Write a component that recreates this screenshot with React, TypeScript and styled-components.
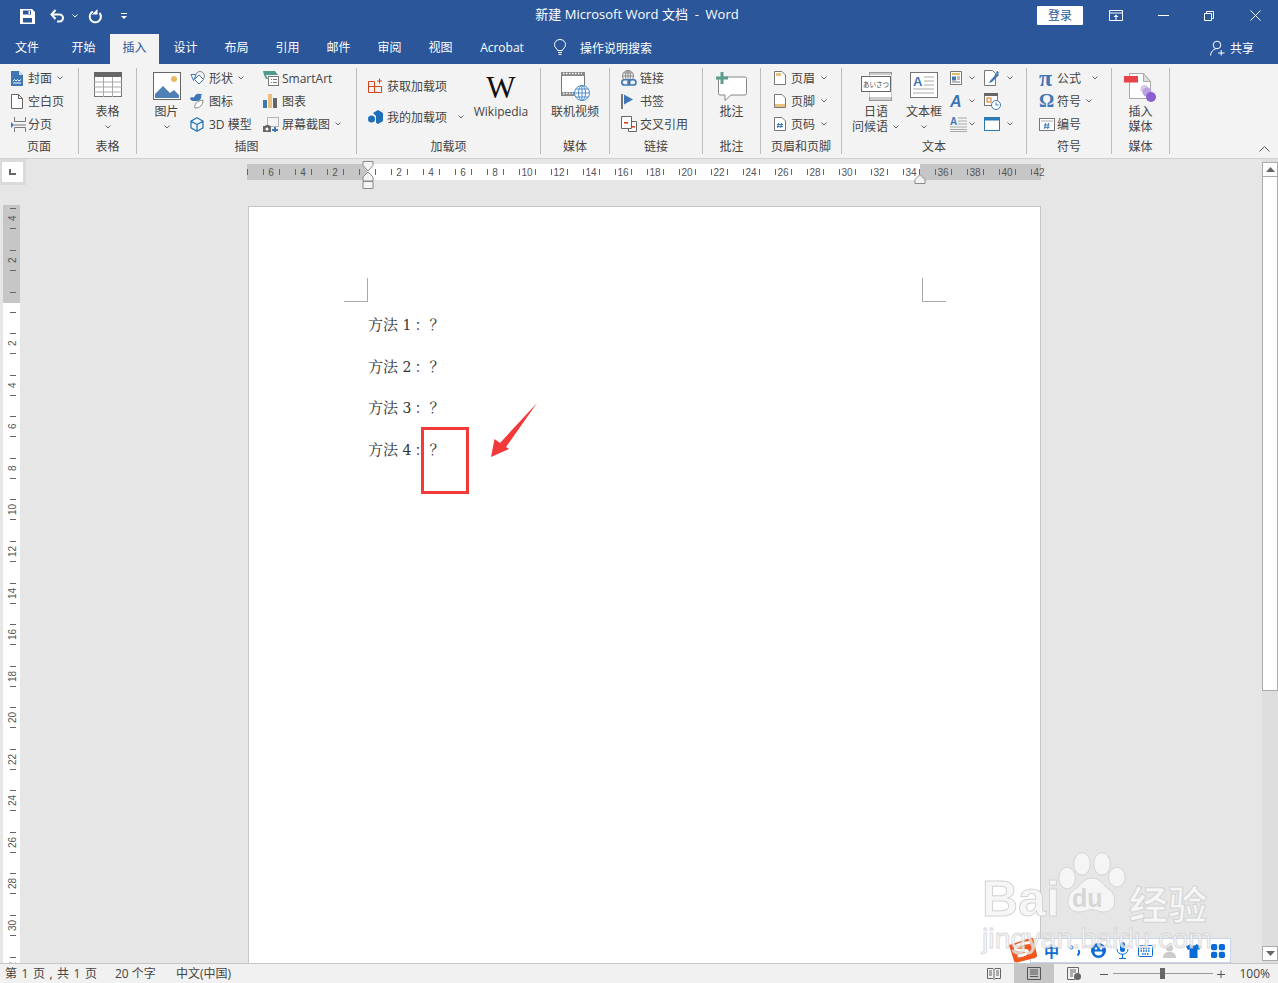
import React from "react";
import styled, { createGlobalStyle } from "styled-components";

const UI_FONT = `"Open Sans", "Noto Sans CJK SC", sans-serif`;
const BLUE = "#2b579a";

const GlobalStyle = createGlobalStyle`
  html, body { margin: 0; height: 100%; overflow: hidden; }
  #root { height: 100%; }
  * { box-sizing: border-box; }
`;

const Ico = styled.svg`
  display: block;
  flex-shrink: 0;
`;

/* chrome icons */
const Chev = ({ c = "#666" }: { c?: string }) => (
  <Ico width="8" height="6" viewBox="0 0 8 6">
    <path d="M1.5 1.5 4 4l2.5-2.5" fill="none" stroke={c} strokeWidth="1" />
  </Ico>
);
const SaveIcon = () => (
  <Ico width="15" height="15" viewBox="0 0 15 15">
    <path fillRule="evenodd" d="M0 0h12l3 3v12H0zM3 1.500v4h8v-4zM3 9v4.500h9V9z" fill="#fff" />
    <path d="M8.500 2h1.500v3H8.500z" fill="#fff" />
  </Ico>
);
const UndoIcon = () => (
  <Ico width="15" height="14" viewBox="0 0 15 14">
    <path d="M2 5.500h7.500a3.500 3.500 0 0 1 0 7H7" fill="none" stroke="#fff" strokeWidth="2" />
    <path d="M5.500 1 1.500 5.500 5.500 10" fill="none" stroke="#fff" strokeWidth="2" />
  </Ico>
);
const RedoIcon = () => (
  <Ico width="15" height="15" viewBox="0 0 15 15">
    <path d="M5 2.600a5.600 5.600 0 1 0 6.500 1.400" fill="none" stroke="#fff" strokeWidth="2" />
    <path d="M10 .5v5.500H4.500z" fill="#fff" transform="translate(-.5 -.5)" />
  </Ico>
);
const QatMore = () => (
  <Ico width="7" height="8" viewBox="0 0 7 8">
    <path d="M0 1h6v1H0zM0 4h6L3 7z" fill="#fff" />
  </Ico>
);
const DisplayOpts = () => (
  <Ico width="14" height="11" viewBox="0 0 14 11">
    <path d="M.5.500h13v10H.5zM.5 3h13" fill="none" stroke="#fff" />
    <path d="M7 4.500 9.500 7h-2v3h-1V7h-2z" fill="#fff" />
  </Ico>
);
const MinIcon = () => (
  <Ico width="11" height="2" viewBox="0 0 11 2">
    <path d="M0 .5h11" stroke="#fff" />
  </Ico>
);
const RestoreIcon = () => (
  <Ico width="10" height="10" viewBox="0 0 10 10">
    <path d="M.5 2.500h7v7h-7zM2.500 2.500v-2h7v7h-2" fill="none" stroke="#fff" />
  </Ico>
);
const CloseIcon = () => (
  <Ico width="11" height="11" viewBox="0 0 11 11">
    <path d="M.5.500l10 10M10.500.500l-10 10" stroke="#fff" />
  </Ico>
);
const BulbIcon = () => (
  <Ico width="14" height="17" viewBox="0 0 14 17">
    <path d="M4.500 11.500C4 9.500 1.500 8.500 1.500 5.500a5.500 5 0 0 1 11 0c0 3-2.500 4-3 6z M5 13.500h4M5.500 15.500h3" fill="none" stroke="#fff" />
  </Ico>
);
const UserPlus = () => (
  <Ico width="15" height="16" viewBox="0 0 15 16">
    <circle cx="7" cy="5" r="3.800" fill="none" stroke="#fff" />
    <path d="M.5 15.500c.3-3.500 2.500-6 5-6.500M8 13h6.500M11.200 10v5.500" fill="none" stroke="#fff" />
  </Ico>
);

/* page group */
const CoverIcon = () => (
  <Ico width="12" height="15" viewBox="0 0 12 15">
    <path d="M0 0h8l4 4v11H0z" fill="#3f77b5" />
    <path d="M8 0v4h4z" fill="#cfe0f0" />
    <path d="M2 10l1.500-1.500L5 10l1.500-1.500L8 10l2-1.500M2 12h8" stroke="#fff" fill="none" />
  </Ico>
);
const BlankIcon = () => (
  <Ico width="12" height="15" viewBox="0 0 12 15">
    <path d="M.5.500h7l4 4v10H.5zM7.500.500v4h4" fill="#fff" stroke="#666" />
  </Ico>
);
const BreakIcon = () => (
  <Ico width="15" height="15" viewBox="0 0 15 15">
    <path d="M0 5v6l3-3z" fill="#3f77b5" />
    <path d="M3.500 0v4.500h11V0M3 8h12M3.500 15v-4.500h11V15" fill="none" stroke="#777" />
  </Ico>
);

/* table + pictures */
const TableIcon = () => (
  <Ico width="28" height="25" viewBox="0 0 28 25">
    <rect x=".5" y=".5" width="27" height="24" fill="#fff" stroke="#777" />
    <rect width="28" height="5" fill="#666" />
    <path d="M0 10h28M0 15h28M0 20h28M9.500 5v20M18.500 5v20" stroke="#aaa" />
  </Ico>
);
const PictureIcon = () => (
  <Ico width="28" height="28" viewBox="0 0 28 28">
    <rect x=".5" y=".5" width="27" height="27" fill="#fff" stroke="#666" />
    <circle cx="21" cy="7" r="3" fill="#e9b863" />
    <path d="M2 26V22l8-8 7 7 4-3 5 5v3z" fill="#4f80b5" />
  </Ico>
);
const ShapesIcon = () => (
  <Ico width="17" height="15" viewBox="0 0 17 15">
    <path d="M1 3.500h5L3.500 9.500z" fill="#fff" stroke="#3f77b5" />
    <circle cx="10" cy="5" r="4.500" fill="none" stroke="#888" />
    <path d="M9 4l4.500 4.500L9 13 4.500 8.500z" fill="#fff" stroke="#3f77b5" />
  </Ico>
);
const IconsIcon = () => (
  <Ico width="16" height="16" viewBox="0 0 16 16">
    <path d="M0 5c1-1 2-1 4-.5C5 2 7 0 10 1l3 0-2 1c1 3-1 6-4 6H3C2 8 0 7 0 5z" fill="#3f77b5" />
    <path d="M5 15c-1-4 2-7 8-8 0 5-3 8-8 8z" fill="#fff" stroke="#888" />
  </Ico>
);
const CubeIcon = () => (
  <Ico width="14" height="15" viewBox="0 0 14 15">
    <path d="M7 .8l6 3.400v6.600l-6 3.400-6-3.400V4.200zM1 4.200l6 3.400 6-3.400M7 7.600v6.600" fill="none" stroke="#2a7ab8" strokeWidth="1.300" />
  </Ico>
);
const SmartArtIcon = () => (
  <Ico width="16" height="15" viewBox="0 0 16 15">
    <path d="M0 0h12l3 4H3L5 8H3L1 4z" fill="#4f9a8c" />
    <rect x="5.500" y="5.500" width="10" height="9" fill="#fff" stroke="#777" />
    <path d="M8 8.500h1M8 11.500h1M10 8.500h4M10 11.500h4" stroke="#777" />
  </Ico>
);
const ChartIcon = () => (
  <Ico width="14" height="14" viewBox="0 0 14 14">
    <rect y="6" width="4" height="8" fill="#3f77b5" />
    <rect x="5" width="4" height="14" fill="#e9c07d" />
    <rect x="10" y="4" width="4" height="10" fill="#666" />
  </Ico>
);
const ScreenshotIcon = () => (
  <Ico width="16" height="15" viewBox="0 0 16 15">
    <rect x="4.500" y=".5" width="11" height="9" fill="none" stroke="#777" strokeDasharray="1 1" />
    <path d="M0 9h2l1-1h3l1 1h1v6H0z" fill="#666" />
    <circle cx="4" cy="12" r="1.500" fill="#fff" />
    <path d="M11 10h2v2h2v2h-2v1h-2v-1H9v-2h2z" fill="#3f77b5" />
  </Ico>
);

/* add-ins + media */
const GetAddins = () => (
  <Ico width="16" height="15" viewBox="0 0 16 15">
    <path d="M.5 3.500h6v5h-6zM6.500 8.500h7v6h-7zM.5 8.500h6v6h-6zM9 3h5M11.500.5v5" fill="none" stroke="#d2441c" />
  </Ico>
);
const MyAddins = () => (
  <Ico width="15" height="14" viewBox="0 0 15 14">
    <path d="M5 3l5-3 5 3v8l-5 3-2-1.200V6z" fill="#1f6fb8" />
    <circle cx="3.500" cy="9" r="3.500" fill="#1f6fb8" />
  </Ico>
);
const OnlineVideo = () => (
  <Ico width="29" height="29" viewBox="0 0 29 29">
    <rect x=".5" y=".5" width="23" height="23" fill="#fff" stroke="#777" />
    <path d="M0 0h24v4H0zM0 20h14v4H0z" fill="#888" />
    <path d="M2 1.500h19M2 21.500h10" stroke="#fff" strokeDasharray="1.500 1.500" strokeWidth="1.500" />
    <circle cx="21" cy="21" r="7.500" fill="#fff" stroke="#4f8cc9" />
    <path d="M13.500 21h15M21 13.500v15M15 17h12M15 25h12" stroke="#4f8cc9" />
    <ellipse cx="21" cy="21" rx="3.500" ry="7.500" fill="none" stroke="#4f8cc9" />
  </Ico>
);
const LinkIcon = () => (
  <Ico width="16" height="16" viewBox="0 0 16 16">
    <circle cx="7" cy="6" r="5.500" fill="none" stroke="#888" />
    <path d="M1.500 6h11M7 .5v11M2.500 3h9" stroke="#888" />
    <ellipse cx="7" cy="6" rx="2.500" ry="5.500" fill="none" stroke="#888" />
    <rect x=".8" y="9.800" width="8" height="5.200" rx="2.600" fill="#f3f3f3" stroke="#3f77b5" strokeWidth="1.600" />
    <rect x="7" y="9.800" width="8" height="5.200" rx="2.600" fill="none" stroke="#3f77b5" strokeWidth="1.600" />
  </Ico>
);
const BookmarkIcon = () => (
  <Ico width="13" height="15" viewBox="0 0 13 15">
    <rect width="2" height="15" fill="#777" />
    <path d="M3 .5l9 5-9 5z" fill="#3f77b5" />
  </Ico>
);
const CrossRefIcon = () => (
  <Ico width="16" height="16" viewBox="0 0 16 16">
    <path d="M.5.500h10v12H.5zM10.500 5.500h5v10h-8v-3" fill="#fff" stroke="#666" />
    <path d="M3 6h4v1.600H3z" fill="#d2441c" />
    <path d="M10.500 10h3.500v1.600h-3.500z" fill="#d2441c" />
  </Ico>
);
const CommentIcon = () => (
  <Ico width="31" height="29" viewBox="0 0 31 29">
    <path d="M5 5h24a1.500 1.500 0 0 1 1.500 1.500v15a1.500 1.500 0 0 1-1.500 1.500H15l-6 5.500V23H4a1.500 1.500 0 0 1-1.500-1.500V7" fill="#fff" stroke="#888" />
    <path d="M4.500 0h3v4.500H12v3H7.500V12h-3V7.500H0v-3h4.500z" fill="#5b9e8e" />
  </Ico>
);
const PageBand = ({ top, bottom, hash }: { top?: boolean; bottom?: boolean; hash?: boolean }) => (
  <Ico width="12" height="14" viewBox="0 0 12 14">
    <path d="M.5.500h7.500l3.500 3.500v9.500H.5z" fill="#fff" stroke="#777" />
    {top && <rect x="2" y="2" width="5" height="3" fill="#e9c07d" />}
    {bottom && <rect x="1" y="10" width="10" height="3" fill="#e9c07d" />}
    {hash && <path d="M4.500 6l-.8 5M7.500 6l-.8 5M3 7.500h6M3 9.500h6" stroke="#3f77b5" />}
  </Ico>
);

/* text group */
const GreetText = styled.text`
  font: 6.500px "Noto Sans CJK JP", sans-serif;
  fill: #444;
`;
const GreetIcon = () => (
  <Ico width="31" height="29" viewBox="0 0 31 29">
    <rect x="8.500" y=".5" width="22" height="28" fill="#ccc" stroke="#999" />
    <rect x="8.500" y="3" width="22" height="22" fill="#fff" />
    <rect x=".5" y="4.500" width="29" height="15" fill="#fff" stroke="#666" />
    <GreetText x="2" y="14.500">あいさつ</GreetText>
  </Ico>
);
const TextBoxA = styled.text`
  font: bold 13px "Liberation Sans", sans-serif;
  fill: #3f77b5;
`;
const TextBoxIcon = () => (
  <Ico width="28" height="26" viewBox="0 0 28 26">
    <rect x=".5" y=".5" width="27" height="25" fill="#fff" stroke="#777" />
    <TextBoxA x="3" y="14">A</TextBoxA>
    <path d="M14 5h10M14 9h10M14 13h10M3 17h21M3 21h21" stroke="#aaa" />
  </Ico>
);
const QuickParts = () => (
  <Ico width="12" height="14" viewBox="0 0 12 14">
    <path d="M.5.500h11v13H.5z" fill="#fff" stroke="#777" />
    <rect x="2" y="2" width="8" height="2" fill="#e9b863" />
    <rect x="2" y="5.500" width="4" height="4" fill="#3f77b5" />
    <path d="M7 6h3M7 8h3M2 11h8" stroke="#777" />
  </Ico>
);
const WordArtA = styled.text`
  font: italic bold 16px "Liberation Sans", sans-serif;
  fill: #3f77b5;
`;
const WordArt = () => (
  <Ico width="14" height="15" viewBox="0 0 14 15">
    <WordArtA x="0" y="13">A</WordArtA>
  </Ico>
);
const DropCapA = styled.text`
  font: bold 10px "Liberation Sans", sans-serif;
  fill: #3f77b5;
`;
const DropCap = () => (
  <Ico width="17" height="16" viewBox="0 0 17 16">
    <DropCapA x="0" y="9">A</DropCapA>
    <path d="M8 2h9M8 5h9M8 8h9M0 11h17M0 13.500h17M0 15.500h17" stroke="#aaa" />
  </Ico>
);
const SignatureIcon = () => (
  <Ico width="16" height="16" viewBox="0 0 16 16">
    <path d="M.5.500h8l3 3v12H.5z" fill="#fff" stroke="#777" />
    <path d="M6 11l7-8 2 2-7 7-3 1z" fill="#3f77b5" />
    <path d="M13 1l2 1-1 2-2-1z" fill="#3f77b5" />
  </Ico>
);
const DateIcon = () => (
  <Ico width="17" height="17" viewBox="0 0 17 17">
    <rect x=".5" y=".5" width="13" height="12" fill="#fff" stroke="#777" />
    <rect width="14" height="3" fill="#666" />
    <rect x="3" y="5" width="4" height="4" fill="none" stroke="#d2741c" />
    <circle cx="12" cy="12" r="4.500" fill="#fff" stroke="#3f77b5" />
    <path d="M12 9.500V12h2.500" fill="none" stroke="#3f77b5" />
  </Ico>
);
const ObjectIcon = () => (
  <Ico width="16" height="14" viewBox="0 0 16 14">
    <rect x=".5" y=".5" width="15" height="13" fill="#fff" stroke="#2a7ab8" />
    <rect width="16" height="3.500" fill="#2a7ab8" />
  </Ico>
);
const NumberIcon = () => (
  <Ico width="16" height="13" viewBox="0 0 16 13">
    <rect x=".5" y=".5" width="15" height="12" fill="#fff" stroke="#777" />
    <path d="M2 3h12" stroke="#aaa" />
    <path d="M6.500 5l-.8 6M9.500 5l-.8 6M5 7h5.500M5 9.300h5.500" stroke="#3f77b5" />
  </Ico>
);
const MediaIcon = () => (
  <Ico width="33" height="30" viewBox="0 0 33 30">
    <path d="M5.500 1.500h14l7 8v17h-21z" fill="#fff" stroke="#aaa" />
    <path d="M19.500 1.500v8h7z" fill="#ddd" stroke="#aaa" />
    <rect y="4" width="14" height="6.500" fill="#e8434a" />
    <circle cx="20.500" cy="17" r="4" fill="#d8c9ec" />
    <circle cx="23" cy="20" r="4.500" fill="#bba3e0" />
    <circle cx="27" cy="25" r="5" fill="#8a5fd0" />
  </Ico>
);

/* status + IME */
const ReadIcon = () => (
  <Ico width="14" height="13" viewBox="0 0 14 13">
    <path d="M.5 1.500h5.500L7 2.500l1-1h5.500v10H8l-1 1-1-1H.5zM7 2.500v9M2 4h3M2 6h3M2 8h3M9 4h3M9 6h3M9 8h3" fill="none" stroke="#666" />
  </Ico>
);
const PrintIcon = () => (
  <Ico width="14" height="13" viewBox="0 0 14 13">
    <path d="M.5.500h13v12H.5zM3 3h8M3 5h8M3 7h8M3 9.500h8" fill="none" stroke="#555" />
  </Ico>
);
const WebIcon = () => (
  <Ico width="14" height="13" viewBox="0 0 14 13">
    <path d="M8 12.500H.5V.5h11V6M3 3h6M3 5h6M3 7h3M3 9h3" fill="none" stroke="#666" />
    <circle cx="10.500" cy="9.500" r="3.500" fill="#666" />
  </Ico>
);

const ImeBlue = "#0a6bd6";
const SogouLogo = () => (
  <Ico width="31" height="26" viewBox="0 0 31 26">
    <path d="M2 8 24 .8Q26 .3 26.500 2.500L30 18Q30.300 20 28 21L10 25.500Q7.500 26 7 24z" fill="#f0561d" />
    <path d="M23 5.500C15 6 8 8 8.500 11.500 9 15 20 12 20.500 14.500 21 17 15 18.500 10.500 19" fill="none" stroke="#fff" strokeWidth="3" />
  </Ico>
);
const ImeZh = styled.span`
  font: bold 15px "Noto Sans CJK SC", sans-serif;
  color: ${ImeBlue};
  line-height: 20px;
`;
const ImeDots = () => (
  <Ico width="12" height="14" viewBox="0 0 12 14">
    <circle cx="2.500" cy="3.500" r="1.500" fill="none" stroke={ImeBlue} />
    <path d="M9 6.500c1.500 0 2 2.500-.5 5" fill="none" stroke={ImeBlue} strokeWidth="2" />
  </Ico>
);
const ImeSmile = () => (
  <Ico width="15" height="15" viewBox="0 0 15 15">
    <circle cx="7.500" cy="7.500" r="7.500" fill={ImeBlue} />
    <circle cx="5" cy="5.500" r="1.300" fill="#fff" />
    <circle cx="10" cy="5.500" r="1.300" fill="#fff" />
    <path d="M3.500 8.500h8a4 4 0 0 1-8 0z" fill="#fff" />
  </Ico>
);
const ImeMic = () => (
  <Ico width="13" height="17" viewBox="0 0 13 17">
    <rect x="4" y="0" width="5" height="10" rx="2.500" fill={ImeBlue} />
    <path d="M1 7c0 7 11 7 11 0M6.500 12v4M3 16.500h7" fill="none" stroke={ImeBlue} />
  </Ico>
);
const ImeKeyboard = () => (
  <Ico width="15" height="13" viewBox="0 0 15 13">
    <rect x=".5" y="1.500" width="14" height="11" rx="1" fill="none" stroke={ImeBlue} />
    <path d="M2.500 4.500h10M2.500 7h10M4 10h7" stroke={ImeBlue} strokeDasharray="1.500 1" strokeWidth="1.300" />
  </Ico>
);
const ImePerson = () => (
  <Ico width="13" height="14" viewBox="0 0 13 14">
    <circle cx="6.500" cy="4" r="3.500" fill="#ccc" />
    <path d="M0 14c0-5 3-6 6.500-6s6.500 1 6.500 6z" fill="#ccc" />
  </Ico>
);
const ImeShirt = () => (
  <Ico width="15" height="14" viewBox="0 0 15 14">
    <path d="M4.500 0C5.500 2 9.500 2 10.500 0L15 2.500 13 6l-1.500-.8V14h-8V5.200L2 6 0 2.500z" fill={ImeBlue} />
  </Ico>
);
const ImeGrid = () => (
  <Ico width="14" height="14" viewBox="0 0 14 14">
    <rect width="6.200" height="6.200" rx="1.800" fill={ImeBlue} />
    <rect x="7.800" width="6.200" height="6.200" rx="1.800" fill={ImeBlue} />
    <rect y="7.800" width="6.200" height="6.200" rx="1.800" fill={ImeBlue} />
    <rect x="7.800" y="7.800" width="6.200" height="6.200" rx="1.800" fill={ImeBlue} />
  </Ico>
);

const PawIcon = () => (
  <Ico width="68" height="74" viewBox="0 0 82 74">
    <g fill="#f5f5f5" stroke="#d4d4d4" strokeWidth="1.200">
      <ellipse cx="11" cy="31" rx="10" ry="13" />
      <ellipse cx="29" cy="14" rx="10" ry="13.500" />
      <ellipse cx="53" cy="14" rx="10" ry="13.500" />
      <ellipse cx="71" cy="30" rx="10" ry="12" />
      <path d="M41 31c10 0 13 9 21 14 9 6 10 27-7 27-7 0-9-3-14-3s-8 3-15 3C8 72 9 51 20 45c8-5 11-14 21-14z" />
    </g>
  </Ico>
);

/* layout */
const Shell = styled.div`
  height: 100vh;
  display: flex;
  flex-direction: column;
  font-family: ${UI_FONT};
  font-size: 12px;
  color: #444;
  background: #e6e6e6;
`;

const TitleBar = styled.header`
  height: 32px;
  flex-shrink: 0;
  display: grid;
  grid-template-columns: 1fr auto 1fr;
  align-items: center;
  background: ${BLUE};
  color: #fff;
`;
const Qat = styled.div`
  display: flex;
  align-items: center;
  padding-left: 20px;
`;
const QatBtn = styled.span<{ $ml?: number }>`
  display: flex;
  margin-left: ${(p) => p.$ml ?? 0}px;
`;
const DocTitle = styled.div`
  font-size: 13px;
  line-height: 18px;
  white-space: pre;
  margin: 0 4px 5px 0;
`;
const WindowBar = styled.div`
  display: flex;
  align-items: center;
  justify-content: flex-end;
  padding-bottom: 1px;
`;
const LoginBtn = styled.button`
  width: 46px;
  height: 19px;
  padding: 0;
  border: 0;
  border-radius: 1px;
  background: #fff;
  color: ${BLUE};
  font: 12px ${UI_FONT};
  line-height: 19px;
  margin-right: 26px;
`;
const WinBtn = styled.span<{ $w: number }>`
  width: ${(p) => p.$w}px;
  display: flex;
  justify-content: center;
`;

const TabBar = styled.nav`
  height: 32px;
  flex-shrink: 0;
  display: flex;
  align-items: flex-end;
  background: ${BLUE};
`;
const Tab = styled.div<{ $active?: boolean; $w?: number; $mr?: number }>`
  width: ${(p) => p.$w ?? (p.$active ? 49 : 51)}px;
  height: 30px;
  margin-left: ${(p) => (p.$active ? 1 : 0)}px;
  margin-right: ${(p) => p.$mr ?? (p.$active ? 1 : 0)}px;
  line-height: 27px;
  text-align: center;
  white-space: nowrap;
  color: ${(p) => (p.$active ? BLUE : "#fff")};
  background: ${(p) => (p.$active ? "#f3f3f3" : "transparent")};
`;
const TellMe = styled.div`
  height: 30px;
  display: flex;
  align-items: center;
  gap: 13px;
  margin-left: 15px;
  padding-bottom: 3px;
  color: #fff;
`;
const Share = styled.div`
  height: 30px;
  display: flex;
  align-items: center;
  gap: 5px;
  margin-left: auto;
  padding-right: 24px;
  padding-bottom: 3px;
  color: #fff;
`;

const Ribbon = styled.section`
  height: 95px;
  flex-shrink: 0;
  display: flex;
  padding: 4px 0;
  background: #f3f3f3;
  border-bottom: 1px solid #d2d2d2;
`;
const Group = styled.div<{ $w: number }>`
  width: ${(p) => p.$w}px;
  flex-shrink: 0;
  display: flex;
  flex-direction: column;
  border-right: 1px solid #bdbdbd;
`;
const GroupBody = styled.div<{ $pad?: number }>`
  height: 66px;
  display: flex;
  padding-left: ${(p) => p.$pad ?? 0}px;
`;
const GroupLabel = styled.div`
  margin-top: auto;
  height: 16px;
  line-height: 18px;
  text-align: center;
  white-space: nowrap;
`;
const SmallCol = styled.div<{ $w?: number; $rh?: number; $ml?: number }>`
  width: ${(p) => (p.$w ? `${p.$w}px` : "auto")};
  margin-left: ${(p) => p.$ml ?? 0}px;
  flex-shrink: 0;
  height: 100%;
  display: flex;
  flex-direction: column;
  justify-content: center;
  > * {
    height: ${(p) => p.$rh ?? 23}px;
  }
`;
const SmallBtn = styled.div`
  flex-shrink: 0;
  display: flex;
  align-items: center;
  white-space: nowrap;
`;
const IconSlot = styled.span<{ $w?: number }>`
  width: ${(p) => p.$w ?? 19}px;
  flex-shrink: 0;
  display: flex;
  align-items: center;
`;
const ChevWrap = styled.span<{ $ml?: number }>`
  margin-left: ${(p) => p.$ml ?? 4}px;
  display: flex;
`;
const LargeBtn = styled.div<{ $w?: number; $grow?: boolean }>`
  width: ${(p) => (p.$w ? `${p.$w}px` : "auto")};
  flex: ${(p) => (p.$grow ? 1 : "none")};
  display: flex;
  flex-direction: column;
  align-items: center;
  padding-top: 4px;
  line-height: 15px;
  white-space: nowrap;
`;
const LargeIcon = styled.div`
  height: 32px;
  display: flex;
  align-items: flex-start;
  justify-content: center;
`;
const LargeLine = styled.div`
  display: flex;
  align-items: center;
  height: 15px;
  gap: 4px;
`;
const WikiW = styled.span`
  font: 31px/28px "Liberation Serif", serif;
  color: #111;
  margin-top: 2px;
`;
const GlyphIcon = styled.span<{ $fs: number }>`
  font: bold ${(p) => p.$fs}px/18px "Liberation Serif", serif;
  color: #3f77b5;
`;
const CollapseBtn = styled.span`
  margin: auto 8px 2px auto;
  display: flex;
`;

const Workspace = styled.main`
  flex: 1;
  min-height: 0;
  display: flex;
`;
const WorkColumn = styled.div`
  flex: 1;
  min-width: 0;
  display: flex;
  flex-direction: column;
`;
const TopRulerRow = styled.div`
  height: 46px;
  flex-shrink: 0;
  display: flex;
  align-items: flex-start;
`;
const CornerBtn = styled.div`
  width: 26px;
  height: 26px;
  flex-shrink: 0;
  display: flex;
  align-items: center;
  justify-content: center;
  background: #fff;
  border: 2px solid #dadada;
  border-width: 3px 3px 3px 2px;
`;
const CornerMark = styled.span`
  width: 7px;
  height: 6px;
  border-left: 2px solid #666;
  border-bottom: 2px solid #666;
`;
const RulerWrap = styled.div`
  position: relative;
  width: 794px;
  margin-left: 221px;
  padding-top: 5px;
`;
const HRuler = styled.div`
  height: 16px;
  display: flex;
  align-items: center;
  background: linear-gradient(
    to right,
    #c6c6c6 120px,
    #fff 120px,
    #fff 673px,
    #c6c6c6 673px
  );
`;
const HLead = styled.span`
  width: 8px;
  height: 6px;
  flex-shrink: 0;
  border-left: 1px solid #666;
`;
const HCell = styled.div`
  width: 32px;
  flex-shrink: 0;
  display: flex;
  justify-content: center;
  &:last-child > span {
    border-right-color: transparent;
  }
`;
const HTick = styled.span`
  width: 17px;
  height: 6px;
  padding-top: 2px;
  border: solid #666;
  border-width: 0 1px;
  display: flex;
  justify-content: center;
  align-items: center;
  font: 10px/6px "Liberation Sans", sans-serif;
  color: #555;
`;
const IndentMark = styled.svg<{ $left: number; $top: number }>`
  position: absolute;
  left: ${(p) => p.$left}px;
  top: ${(p) => p.$top}px;
`;
const DocRow = styled.div`
  flex: 1;
  min-height: 0;
  display: flex;
`;
const VRuler = styled.div`
  width: 17px;
  margin-left: 3px;
  flex-shrink: 0;
  display: flex;
  flex-direction: column;
  align-items: stretch;
  overflow: hidden;
  background: linear-gradient(to bottom, #c6c6c6 98px, #fff 98px);
`;
const VCell = styled.div`
  height: 41.57px;
  flex-shrink: 0;
  display: flex;
  align-items: center;
  justify-content: center;
  padding-left: 2px;
  &:first-child {
    margin-top: -6.800px;
  }
`;
const VTick = styled.span`
  width: 6px;
  height: 21px;
  border: solid #666;
  border-width: 1px 0;
  display: flex;
  align-items: center;
  justify-content: center;
  writing-mode: vertical-rl;
  transform: rotate(180deg);
  font: 10px/6px "Liberation Sans", sans-serif;
  color: #555;
`;
const Viewport = styled.div`
  flex: 1;
  min-width: 0;
  overflow: hidden;
  padding: 1px 0 0 228px;
`;
const Page = styled.article`
  position: relative;
  width: 793px;
  height: 900px;
  padding: 71px 94px 0 95px;
  background: #fff;
  border: 1px solid #c6c6c6;
  font-family: "Liberation Serif", "Noto Serif CJK SC", "Noto Sans CJK SC", serif;
  font-size: 15px;
  color: #333;
`;
const CropRow = styled.div`
  display: flex;
  justify-content: space-between;
  margin-bottom: 3px;
`;
const CropMark = styled.span<{ $right?: boolean }>`
  width: 24px;
  height: 24px;
  border-bottom: 1px solid #aaa;
  ${(p) => (p.$right ? "border-left" : "border-right")}: 1px solid #aaa;
`;
const Para = styled.p`
  margin: 0 0 0 24px;
  height: 41.5px;
  line-height: 41.5px;
  white-space: pre;
`;
const ParaNum = styled.span`
  padding-right: 3px;
  font-family: "DejaVu Serif", serif;
  font-size: 14px;
`;
const RedBox = styled.div`
  position: absolute;
  left: 172px;
  top: 220px;
  width: 48px;
  height: 67px;
  border: 3px solid #f33a3a;
`;
const ArrowSvg = styled.svg`
  position: absolute;
  left: 241px;
  top: 195px;
`;

const Scrollbar = styled.aside`
  width: 16px;
  flex-shrink: 0;
  padding-top: 3px;
  padding-bottom: 2px;
  display: flex;
  flex-direction: column;
  background: #dedede;
`;
const ScrollBtn = styled.div`
  height: 15px;
  flex-shrink: 0;
  display: flex;
  align-items: center;
  justify-content: center;
  background: #fff;
  border: 1px solid #ababab;
`;
const ScrollThumb = styled.div`
  height: 514px;
  flex-shrink: 0;
  background: #fff;
  border: 1px solid #ababab;
  border-top: 0;
`;
const ScrollSpace = styled.div`
  flex: 1;
`;

const StatusBar = styled.footer`
  height: 20px;
  flex-shrink: 0;
  display: flex;
  align-items: center;
  background: #f1f1f1;
  border-top: 1px solid #c6c6c6;
  padding-left: 5px;
  line-height: 16px;
  white-space: nowrap;
  color: #444;
`;
const StatusText = styled.span<{ $w: number; $ws?: number }>`
  width: ${(p) => p.$w}px;
  word-spacing: ${(p) => p.$ws ?? 0}px;
  flex-shrink: 0;
`;
const StatusRight = styled.div`
  margin-left: auto;
  height: 100%;
  display: flex;
  align-items: center;
`;
const ViewBtn = styled.span<{ $active?: boolean }>`
  width: 40px;
  height: 19px;
  display: flex;
  align-items: center;
  justify-content: center;
  background: ${(p) => (p.$active ? "#c6c6c6" : "transparent")};
`;
const ZoomSign = styled.span<{ $ml: number }>`
  width: 8px;
  margin-left: ${(p) => p.$ml}px;
  display: flex;
`;
const ZoomTrack = styled.div`
  position: relative;
  width: 100px;
  height: 1px;
  margin-left: 5px;
  background: #999;
`;
const ZoomThumb = styled.span`
  position: absolute;
  left: 47px;
  top: -5px;
  width: 5px;
  height: 11px;
  background: #666;
`;
const ZoomPct = styled.span`
  margin-left: 14px;
  padding-right: 8px;
`;

const Watermark = styled.div`
  position: absolute;
  right: 70px;
  bottom: 0;
  z-index: 2;
  width: 226px;
  height: 118px;
  pointer-events: none;
`;
const WmRow = styled.div`
  display: flex;
  align-items: flex-end;
  height: 75px;
`;
const WmBig = styled.span`
  width: 76px;
  flex-shrink: 0;
  margin-bottom: -4px;
  font: bold 50px/50px "Liberation Sans", sans-serif;
  color: #f6f6f6;
  -webkit-text-stroke: 1px #d4d4d4;
`;
const WmPaw = styled.div`
  position: relative;
  flex-shrink: 0;
`;
const WmDu = styled.span`
  position: absolute;
  left: 14px;
  bottom: 8px;
  font: bold 25px/28px "Liberation Sans", sans-serif;
  color: #d6d6d6;
`;
const WmCn = styled.span`
  margin: 0 0 -1px 3px;
  font: bold 39px/38px "Noto Sans CJK SC", sans-serif;
  color: #f6f6f6;
  -webkit-text-stroke: 1px #d4d4d4;
  white-space: nowrap;
`;
const WmUrl = styled.div`
  margin-top: 3px;
  font: 28.5px/30px "Liberation Sans", sans-serif;
  color: rgba(246, 246, 246, 0.75);
  -webkit-text-stroke: 1px rgba(205, 205, 205, 0.7);
  white-space: nowrap;
`;
const ImeBar = styled.div`
  position: absolute;
  right: 47px;
  bottom: 0;
  z-index: 1;
  display: flex;
  align-items: flex-end;
`;
const ImeLogoWrap = styled.span`
  margin-right: -8px;
  position: relative;
  z-index: 1;
`;
const ImeTray = styled.div`
  width: 201px;
  height: 25px;
  display: flex;
  align-items: center;
  justify-content: space-between;
  padding: 0 5px 0 13px;
  background: #fff;
  border: 1px solid #c5d6ec;
`;
const WorkspaceWrap = styled.div`
  position: relative;
  flex: 1;
  min-height: 0;
  display: flex;
`;

const H_LABELS = [6, 4, 2, 0, ...Array.from({ length: 21 }, (_, i) => (i + 1) * 2)];
const V_LABELS = [4, 2, 0, ...Array.from({ length: 16 }, (_, i) => (i + 1) * 2)];
const TABS = ["设计", "布局", "引用", "邮件", "审阅", "视图"];
const METHODS = [1, 2, 3, 4];

export default function App() {
  return (
    <Shell>
      <GlobalStyle />
      <TitleBar>
        <Qat>
          <SaveIcon />
          <QatBtn $ml={15}><UndoIcon /></QatBtn>
          <QatBtn $ml={6}><Chev c="#fff" /></QatBtn>
          <QatBtn $ml={9}><RedoIcon /></QatBtn>
          <QatBtn $ml={18}><QatMore /></QatBtn>
        </Qat>
        <DocTitle>新建 Microsoft Word 文档  -  Word</DocTitle>
        <WindowBar>
          <LoginBtn>登录</LoginBtn>
          <WinBtn $w={14}><DisplayOpts /></WinBtn>
          <WinBtn $w={35} />
          <WinBtn $w={10}><MinIcon /></WinBtn>
          <WinBtn $w={36} />
          <WinBtn $w={10}><RestoreIcon /></WinBtn>
          <WinBtn $w={36} />
          <WinBtn $w={11}><CloseIcon /></WinBtn>
          <WinBtn $w={17} />
        </WindowBar>
      </TitleBar>

      <TabBar>
        <Tab $w={54} $mr={4}>文件</Tab>
        <Tab>开始</Tab>
        <Tab $active>插入</Tab>
        {TABS.map((t) => (
          <Tab key={t}>{t}</Tab>
        ))}
        <Tab $w={72}>Acrobat</Tab>
        <TellMe>
          <BulbIcon />
          操作说明搜索
        </TellMe>
        <Share>
          <UserPlus />
          共享
        </Share>
      </TabBar>

      <Ribbon>
        <Group $w={79}>
          <GroupBody $pad={11}>
            <SmallCol>
              <SmallBtn><IconSlot $w={17}><CoverIcon /></IconSlot>封面<ChevWrap><Chev /></ChevWrap></SmallBtn>
              <SmallBtn><IconSlot $w={17}><BlankIcon /></IconSlot>空白页</SmallBtn>
              <SmallBtn><IconSlot $w={17}><BreakIcon /></IconSlot>分页</SmallBtn>
            </SmallCol>
          </GroupBody>
          <GroupLabel>页面</GroupLabel>
        </Group>

        <Group $w={58}>
          <GroupBody>
            <LargeBtn $grow>
              <LargeIcon><TableIcon /></LargeIcon>
              <LargeLine>表格</LargeLine>
              <LargeLine><Chev /></LargeLine>
            </LargeBtn>
          </GroupBody>
          <GroupLabel>表格</GroupLabel>
        </Group>

        <Group $w={220}>
          <GroupBody $pad={6}>
            <LargeBtn $w={47}>
              <LargeIcon><PictureIcon /></LargeIcon>
              <LargeLine>图片</LargeLine>
              <LargeLine><Chev /></LargeLine>
            </LargeBtn>
            <SmallCol $w={73}>
              <SmallBtn><IconSlot><ShapesIcon /></IconSlot>形状<ChevWrap><Chev /></ChevWrap></SmallBtn>
              <SmallBtn><IconSlot><IconsIcon /></IconSlot>图标</SmallBtn>
              <SmallBtn><IconSlot><CubeIcon /></IconSlot>3D 模型</SmallBtn>
            </SmallCol>
            <SmallCol>
              <SmallBtn><IconSlot><SmartArtIcon /></IconSlot>SmartArt</SmallBtn>
              <SmallBtn><IconSlot><ChartIcon /></IconSlot>图表</SmallBtn>
              <SmallBtn><IconSlot><ScreenshotIcon /></IconSlot>屏幕截图<ChevWrap><Chev /></ChevWrap></SmallBtn>
            </SmallCol>
          </GroupBody>
          <GroupLabel>插图</GroupLabel>
        </Group>

        <Group $w={184}>
          <GroupBody $pad={11}>
            <SmallCol $w={102} $rh={31}>
              <SmallBtn><IconSlot><GetAddins /></IconSlot>获取加载项</SmallBtn>
              <SmallBtn><IconSlot><MyAddins /></IconSlot>我的加载项<ChevWrap $ml={10}><Chev /></ChevWrap></SmallBtn>
            </SmallCol>
            <LargeBtn $w={62}>
              <LargeIcon><WikiW>W</WikiW></LargeIcon>
              <LargeLine>Wikipedia</LargeLine>
            </LargeBtn>
          </GroupBody>
          <GroupLabel>加载项</GroupLabel>
        </Group>

        <Group $w={69}>
          <GroupBody>
            <LargeBtn $grow>
              <LargeIcon><OnlineVideo /></LargeIcon>
              <LargeLine>联机视频</LargeLine>
            </LargeBtn>
          </GroupBody>
          <GroupLabel>媒体</GroupLabel>
        </Group>

        <Group $w={93}>
          <GroupBody $pad={11}>
            <SmallCol>
              <SmallBtn><IconSlot><LinkIcon /></IconSlot>链接</SmallBtn>
              <SmallBtn><IconSlot><BookmarkIcon /></IconSlot>书签</SmallBtn>
              <SmallBtn><IconSlot><CrossRefIcon /></IconSlot>交叉引用</SmallBtn>
            </SmallCol>
          </GroupBody>
          <GroupLabel>链接</GroupLabel>
        </Group>

        <Group $w={58}>
          <GroupBody>
            <LargeBtn $grow>
              <LargeIcon><CommentIcon /></LargeIcon>
              <LargeLine>批注</LargeLine>
            </LargeBtn>
          </GroupBody>
          <GroupLabel>批注</GroupLabel>
        </Group>

        <Group $w={81}>
          <GroupBody $pad={13}>
            <SmallCol>
              <SmallBtn><IconSlot $w={17}><PageBand top /></IconSlot>页眉<ChevWrap $ml={5}><Chev /></ChevWrap></SmallBtn>
              <SmallBtn><IconSlot $w={17}><PageBand bottom /></IconSlot>页脚<ChevWrap $ml={5}><Chev /></ChevWrap></SmallBtn>
              <SmallBtn><IconSlot $w={17}><PageBand hash /></IconSlot>页码<ChevWrap $ml={5}><Chev /></ChevWrap></SmallBtn>
            </SmallCol>
          </GroupBody>
          <GroupLabel>页眉和页脚</GroupLabel>
        </Group>

        <Group $w={185}>
          <GroupBody $pad={4}>
            <LargeBtn $w={60}>
              <LargeIcon><GreetIcon /></LargeIcon>
              <LargeLine>日语</LargeLine>
              <LargeLine>问候语<Chev /></LargeLine>
            </LargeBtn>
            <LargeBtn $w={36}>
              <LargeIcon><TextBoxIcon /></LargeIcon>
              <LargeLine>文本框</LargeLine>
              <LargeLine><Chev /></LargeLine>
            </LargeBtn>
            <SmallCol $w={34} $ml={8}>
              <SmallBtn><IconSlot $w={15}><QuickParts /></IconSlot><ChevWrap $ml={3}><Chev /></ChevWrap></SmallBtn>
              <SmallBtn><IconSlot $w={15}><WordArt /></IconSlot><ChevWrap $ml={3}><Chev /></ChevWrap></SmallBtn>
              <SmallBtn><IconSlot $w={15}><DropCap /></IconSlot><ChevWrap $ml={3}><Chev /></ChevWrap></SmallBtn>
            </SmallCol>
            <SmallCol>
              <SmallBtn><IconSlot $w={17}><SignatureIcon /></IconSlot><ChevWrap $ml={5}><Chev /></ChevWrap></SmallBtn>
              <SmallBtn><IconSlot $w={17}><DateIcon /></IconSlot></SmallBtn>
              <SmallBtn><IconSlot $w={17}><ObjectIcon /></IconSlot><ChevWrap $ml={5}><Chev /></ChevWrap></SmallBtn>
            </SmallCol>
          </GroupBody>
          <GroupLabel>文本</GroupLabel>
        </Group>

        <Group $w={85}>
          <GroupBody $pad={12}>
            <SmallCol>
              <SmallBtn><IconSlot $w={18}><GlyphIcon $fs={24}>π</GlyphIcon></IconSlot>公式<ChevWrap $ml={10}><Chev /></ChevWrap></SmallBtn>
              <SmallBtn><IconSlot $w={18}><GlyphIcon $fs={19}>Ω</GlyphIcon></IconSlot>符号<ChevWrap><Chev /></ChevWrap></SmallBtn>
              <SmallBtn><IconSlot $w={18}><NumberIcon /></IconSlot>编号</SmallBtn>
            </SmallCol>
          </GroupBody>
          <GroupLabel>符号</GroupLabel>
        </Group>

        <Group $w={58}>
          <GroupBody>
            <LargeBtn $grow>
              <LargeIcon><MediaIcon /></LargeIcon>
              <LargeLine>插入</LargeLine>
              <LargeLine>媒体</LargeLine>
            </LargeBtn>
          </GroupBody>
          <GroupLabel>媒体</GroupLabel>
        </Group>

        <CollapseBtn>
          <Ico width="11" height="6" viewBox="0 0 11 6">
            <path d="M.5 5.500l5-5 5 5" fill="none" stroke="#555" />
          </Ico>
        </CollapseBtn>
      </Ribbon>

      <WorkspaceWrap>
        <Workspace>
          <WorkColumn>
            <TopRulerRow>
              <CornerBtn><CornerMark /></CornerBtn>
              <RulerWrap>
                <HRuler>
                  <HLead />
                  {H_LABELS.map((n, i) => (
                    <HCell key={i}>
                      <HTick>{n || ""}</HTick>
                    </HCell>
                  ))}
                </HRuler>
                <IndentMark $left={115} $top={2} width="12" height="28" viewBox="0 0 12 28">
                  <path d="M1 .5h10v4L6 10 1 4.500zM6 11l5 5v4H1v-4zM1 20.500h10v7H1z" fill="#f3f3f3" stroke="#8a8a8a" />
                </IndentMark>
                <IndentMark $left={667} $top={15} width="12" height="10" viewBox="0 0 12 10">
                  <path d="M6 .5l5 5v4H1v-4z" fill="#f3f3f3" stroke="#8a8a8a" />
                </IndentMark>
              </RulerWrap>
            </TopRulerRow>
            <DocRow>
              <VRuler>
                {V_LABELS.map((n, i) => (
                  <VCell key={i}>
                    <VTick>{n || ""}</VTick>
                  </VCell>
                ))}
              </VRuler>
              <Viewport>
                <Page>
                  <CropRow>
                    <CropMark />
                    <CropMark $right />
                  </CropRow>
                  {METHODS.map((n) => (
                    <Para key={n}>
                      方法<ParaNum> {n}</ParaNum>：？
                    </Para>
                  ))}
                  <RedBox />
                  <ArrowSvg width="50" height="60" viewBox="0 0 50 60">
                    <path d="M1 55 4.500 37 10 41 47 1 16 45 19 47z" fill="#f33a3a" />
                  </ArrowSvg>
                </Page>
              </Viewport>
            </DocRow>
          </WorkColumn>
          <Scrollbar>
            <ScrollBtn>
              <Ico width="9" height="5" viewBox="0 0 9 5"><path d="M4.500 0 9 5H0z" fill="#666" /></Ico>
            </ScrollBtn>
            <ScrollThumb />
            <ScrollSpace />
            <ScrollBtn>
              <Ico width="9" height="5" viewBox="0 0 9 5"><path d="M0 0h9L4.500 5z" fill="#666" /></Ico>
            </ScrollBtn>
          </Scrollbar>
        </Workspace>
        <ImeBar>
          <ImeLogoWrap><SogouLogo /></ImeLogoWrap>
          <ImeTray>
            <ImeZh>中</ImeZh>
            <ImeDots />
            <ImeSmile />
            <ImeMic />
            <ImeKeyboard />
            <ImePerson />
            <ImeShirt />
            <ImeGrid />
          </ImeTray>
        </ImeBar>
        <Watermark>
          <WmRow>
            <WmBig>Bai</WmBig>
            <WmPaw>
              <PawIcon />
              <WmDu>du</WmDu>
            </WmPaw>
            <WmCn>经验</WmCn>
          </WmRow>
          <WmUrl>jingyan.baidu.com</WmUrl>
        </Watermark>
      </WorkspaceWrap>

      <StatusBar>
        <StatusText $w={110} $ws={1.400}>第 1 页 , 共 1 页</StatusText>
        <StatusText $w={61}>20 个字</StatusText>
        <StatusText $w={70}>中文(中国)</StatusText>
        <StatusRight>
          <ViewBtn><ReadIcon /></ViewBtn>
          <ViewBtn $active><PrintIcon /></ViewBtn>
          <ViewBtn><WebIcon /></ViewBtn>
          <ZoomSign $ml={6}>
            <Ico width="8" height="8" viewBox="0 0 8 8"><path d="M0 4.500h8" stroke="#555" /></Ico>
          </ZoomSign>
          <ZoomTrack><ZoomThumb /></ZoomTrack>
          <ZoomSign $ml={4}>
            <Ico width="8" height="8" viewBox="0 0 8 8"><path d="M0 4.500h8M4 .5v8" stroke="#555" /></Ico>
          </ZoomSign>
          <ZoomPct>100%</ZoomPct>
        </StatusRight>
      </StatusBar>
    </Shell>
  );
}
